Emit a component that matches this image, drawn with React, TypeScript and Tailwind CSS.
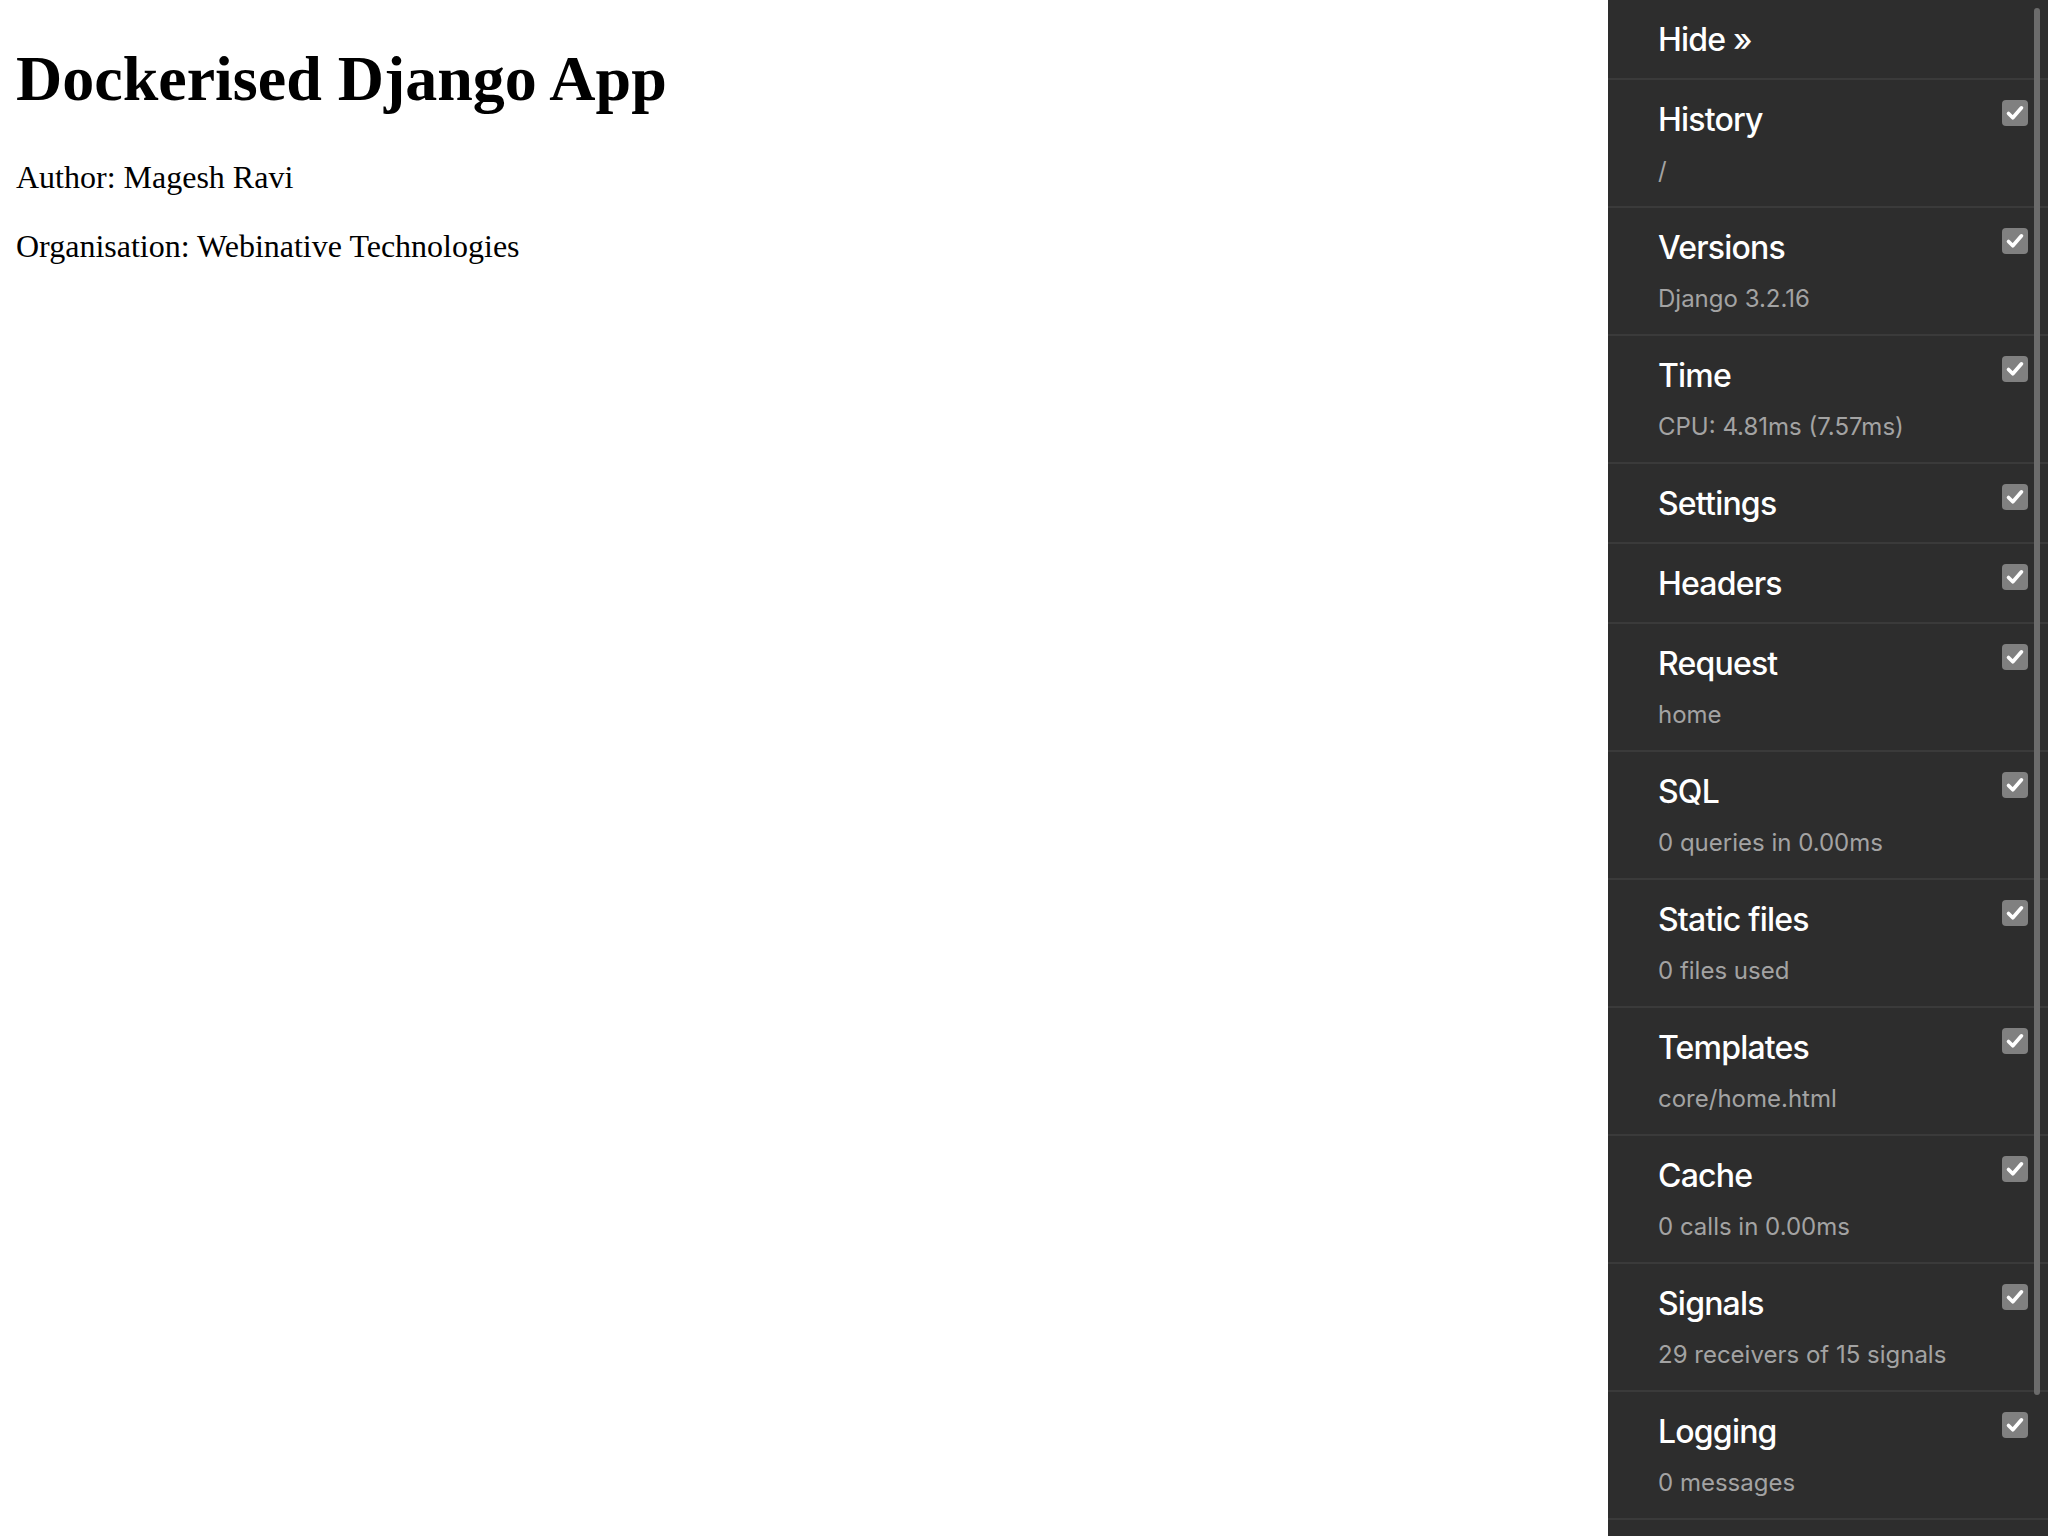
import React from "react";

type Panel = { title: string; sub?: string };

const panels: Panel[] = [
  { title: "History", sub: "/" },
  { title: "Versions", sub: "Django 3.2.16" },
  { title: "Time", sub: "CPU: 4.81ms (7.57ms)" },
  { title: "Settings" },
  { title: "Headers" },
  { title: "Request", sub: "home" },
  { title: "SQL", sub: "0 queries in 0.00ms" },
  { title: "Static files", sub: "0 files used" },
  { title: "Templates", sub: "core/home.html" },
  { title: "Cache", sub: "0 calls in 0.00ms" },
  { title: "Signals", sub: "29 receivers of 15 signals" },
  { title: "Logging", sub: "0 messages" },
];

function CheckBox() {
  return (
    <span className="mt-5 mr-5 flex h-[26px] w-[26px] shrink-0 items-center justify-center rounded-[4px] bg-[#808080]">
      <svg width="26" height="26" viewBox="0 0 26 26">
        <path d="M6.5 13.5 L10.8 17.8 L19.5 7.8" fill="none" stroke="#fff" strokeWidth="3.6" strokeLinecap="round" strokeLinejoin="round" />
      </svg>
    </span>
  );
}

function PanelRow({ p }: { p: Panel }) {
  return (
    <li className={"flex border-b-2 border-[#3a3a3a] " + (p.sub ? "h-[128px]" : "h-[80px]")}>
      <div className="flex-1 pl-[50px] pt-[16px]">
        <div className="text-[32px] font-medium leading-[48px] tracking-[-0.8px] text-white">{p.title}</div>
        {p.sub && <div className="mt-[3px] text-[24px] leading-[48px] text-[#a3a3a3]">{p.sub}</div>}
      </div>
      <CheckBox />
    </li>
  );
}

export default function App() {
  return (
    <div className="flex h-[1536px] w-[2048px] overflow-hidden bg-white">
      <main className="flex-1 px-4 font-['Liberation_Serif',serif] text-black">
        <h1 className="mt-[43px] mb-[45px] text-[64px] font-bold leading-[71px]">Dockerised Django App</h1>
        <p className="mb-8 text-[32px] leading-[37px]">Author: Magesh Ravi</p>
        <p className="text-[32px] leading-[37px]">Organisation: Webinative Technologies</p>
      </main>

      <aside className="relative h-full w-[440px] shrink-0 bg-[#2d2d2d] font-['Inter',sans-serif]">
        <ul>
          <li className="h-[80px] border-b-2 border-[#3a3a3a] pl-[50px] pt-[16px]">
            <span className="text-[32px] font-medium leading-[48px] tracking-[-0.8px] text-white">Hide »</span>
          </li>
          {panels.map((p) => (
            <PanelRow key={p.title} p={p} />
          ))}
        </ul>
        <div className="absolute top-[8px] right-[8px] h-[1387px] w-[6px] rounded-full bg-[#6b6b6b]" />
      </aside>
    </div>
  );
}
